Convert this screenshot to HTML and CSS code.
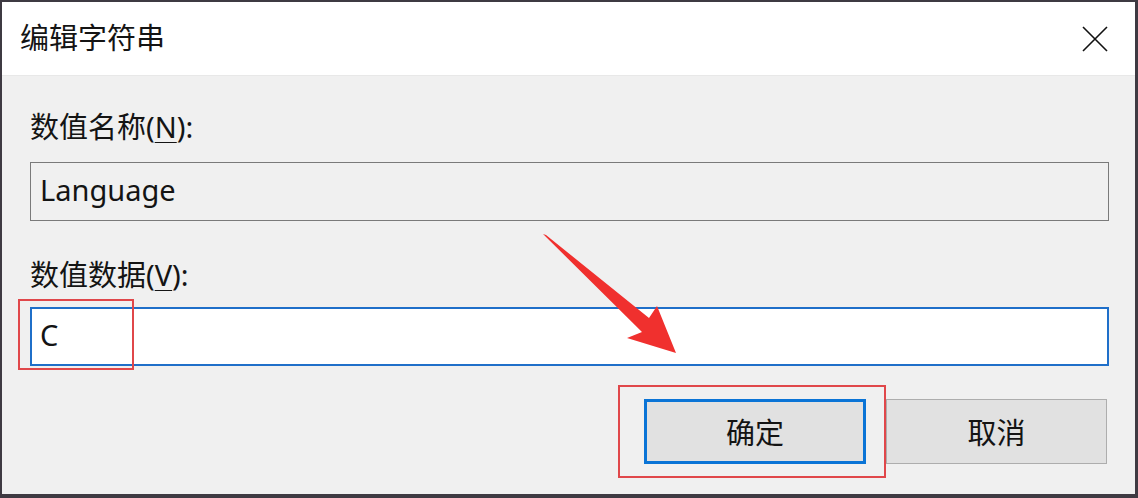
FILE: index.html
```html
<!DOCTYPE html>
<html lang="zh-CN">
<head>
<meta charset="utf-8">
<title>编辑字符串</title>
<link rel="stylesheet" href="styles.css">
</head>
<body>
<div class="dialog">
  <div class="titlebar">
    <span class="title">编辑字符串</span>
    <span class="close">
      <svg width="26" height="26" viewBox="0 0 26 26"><path d="M1 1 L25 25 M25 1 L1 25" stroke="#111" stroke-width="1.6" fill="none"/></svg>
    </span>
  </div>
  <div class="content">
    <div class="label label-name">数值名称(<u>N</u>):</div>
    <div class="field field-readonly">Language</div>
    <div class="label label-data">数值数据(<u>V</u>):</div>
    <div class="field-wrap">
      <div class="field field-active">C</div>
      <div class="mark mark-c"></div>
    </div>
    <div class="buttons">
      <div class="btn-wrap">
        <div class="btn btn-default">确定</div>
        <div class="mark mark-ok"></div>
      </div>
      <div class="btn">取消</div>
    </div>
  </div>
</div>
<svg class="arrow" width="1138" height="498" viewBox="0 0 1138 498">
  <polygon points="543,234 546,235 649,318 657,306 676,353 627,338 642,332" fill="#f0302e"/>
</svg>
</body>
</html>
```
FILE: styles.css
```css
html, body {
  margin: 0;
  padding: 0;
}
body {
  width: 1138px;
  height: 498px;
  background: #3e3a42;
  position: relative;
  overflow: hidden;
  font-family: "Noto Sans", "Noto Sans CJK SC", sans-serif;
  color: #141414;
}
.dialog {
  position: absolute;
  left: 2px;
  top: 2px;
  width: 1133px;
  height: 492px;
  background: #f0f0f0;
  display: flex;
  flex-direction: column;
}
.titlebar {
  height: 74px;
  background: #ffffff;
  display: flex;
  align-items: center;
  justify-content: space-between;
  padding: 0 27px 0 18px;
  border-bottom: 1px solid #e8e8e8;
  box-sizing: border-box;
}
.title {
  font-size: 29px;
  line-height: 40px;
  margin-top: -2px;
}
.close {
  display: flex;
  width: 26px;
  height: 26px;
}
.content {
  padding: 0 26px 0 28px;
  display: flex;
  flex-direction: column;
}
.label {
  font-size: 29px;
  line-height: 40px;
  height: 40px;
}
.label u {
  text-decoration-thickness: 1px;
  text-underline-offset: 4px;
}
.label-name {
  margin-top: 31px;
}
.field {
  box-sizing: border-box;
  border: 1px solid #7a7a7a;
  font-size: 29px;
  padding-left: 9px;
  padding-bottom: 5px;
  display: flex;
  align-items: center;
}
.field-readonly {
  margin-top: 15px;
  height: 59px;
  background: #f0f0f0;
}
.label-data {
  margin-top: 34px;
}
.field-wrap {
  position: relative;
  margin-top: 12px;
}
.field-active {
  height: 59px;
  background: #ffffff;
  border: 2px solid #1f6fc9;
  padding-left: 8px;
}
.mark {
  position: absolute;
  border: 2px solid #e0474a;
  box-sizing: border-box;
}
.mark-c {
  left: -12px;
  top: -8px;
  width: 116px;
  height: 71px;
}
.buttons {
  margin-top: 33px;
  display: flex;
  justify-content: flex-end;
  gap: 20px;
  padding-right: 2px;
}
.btn-wrap {
  position: relative;
  display: flex;
}
.btn {
  box-sizing: border-box;
  width: 221px;
  height: 65px;
  background: #e1e1e1;
  border: 1px solid #adadad;
  font-size: 29px;
  display: flex;
  align-items: center;
  justify-content: center;
  padding-bottom: 2px;
}
.btn-default {
  width: 222px;
  border: 3px solid #0a74d6;
}
.mark-ok {
  left: -26px;
  top: -14px;
  width: 268px;
  height: 93px;
}
.arrow {
  position: absolute;
  left: 0;
  top: 0;
  pointer-events: none;
}
```
